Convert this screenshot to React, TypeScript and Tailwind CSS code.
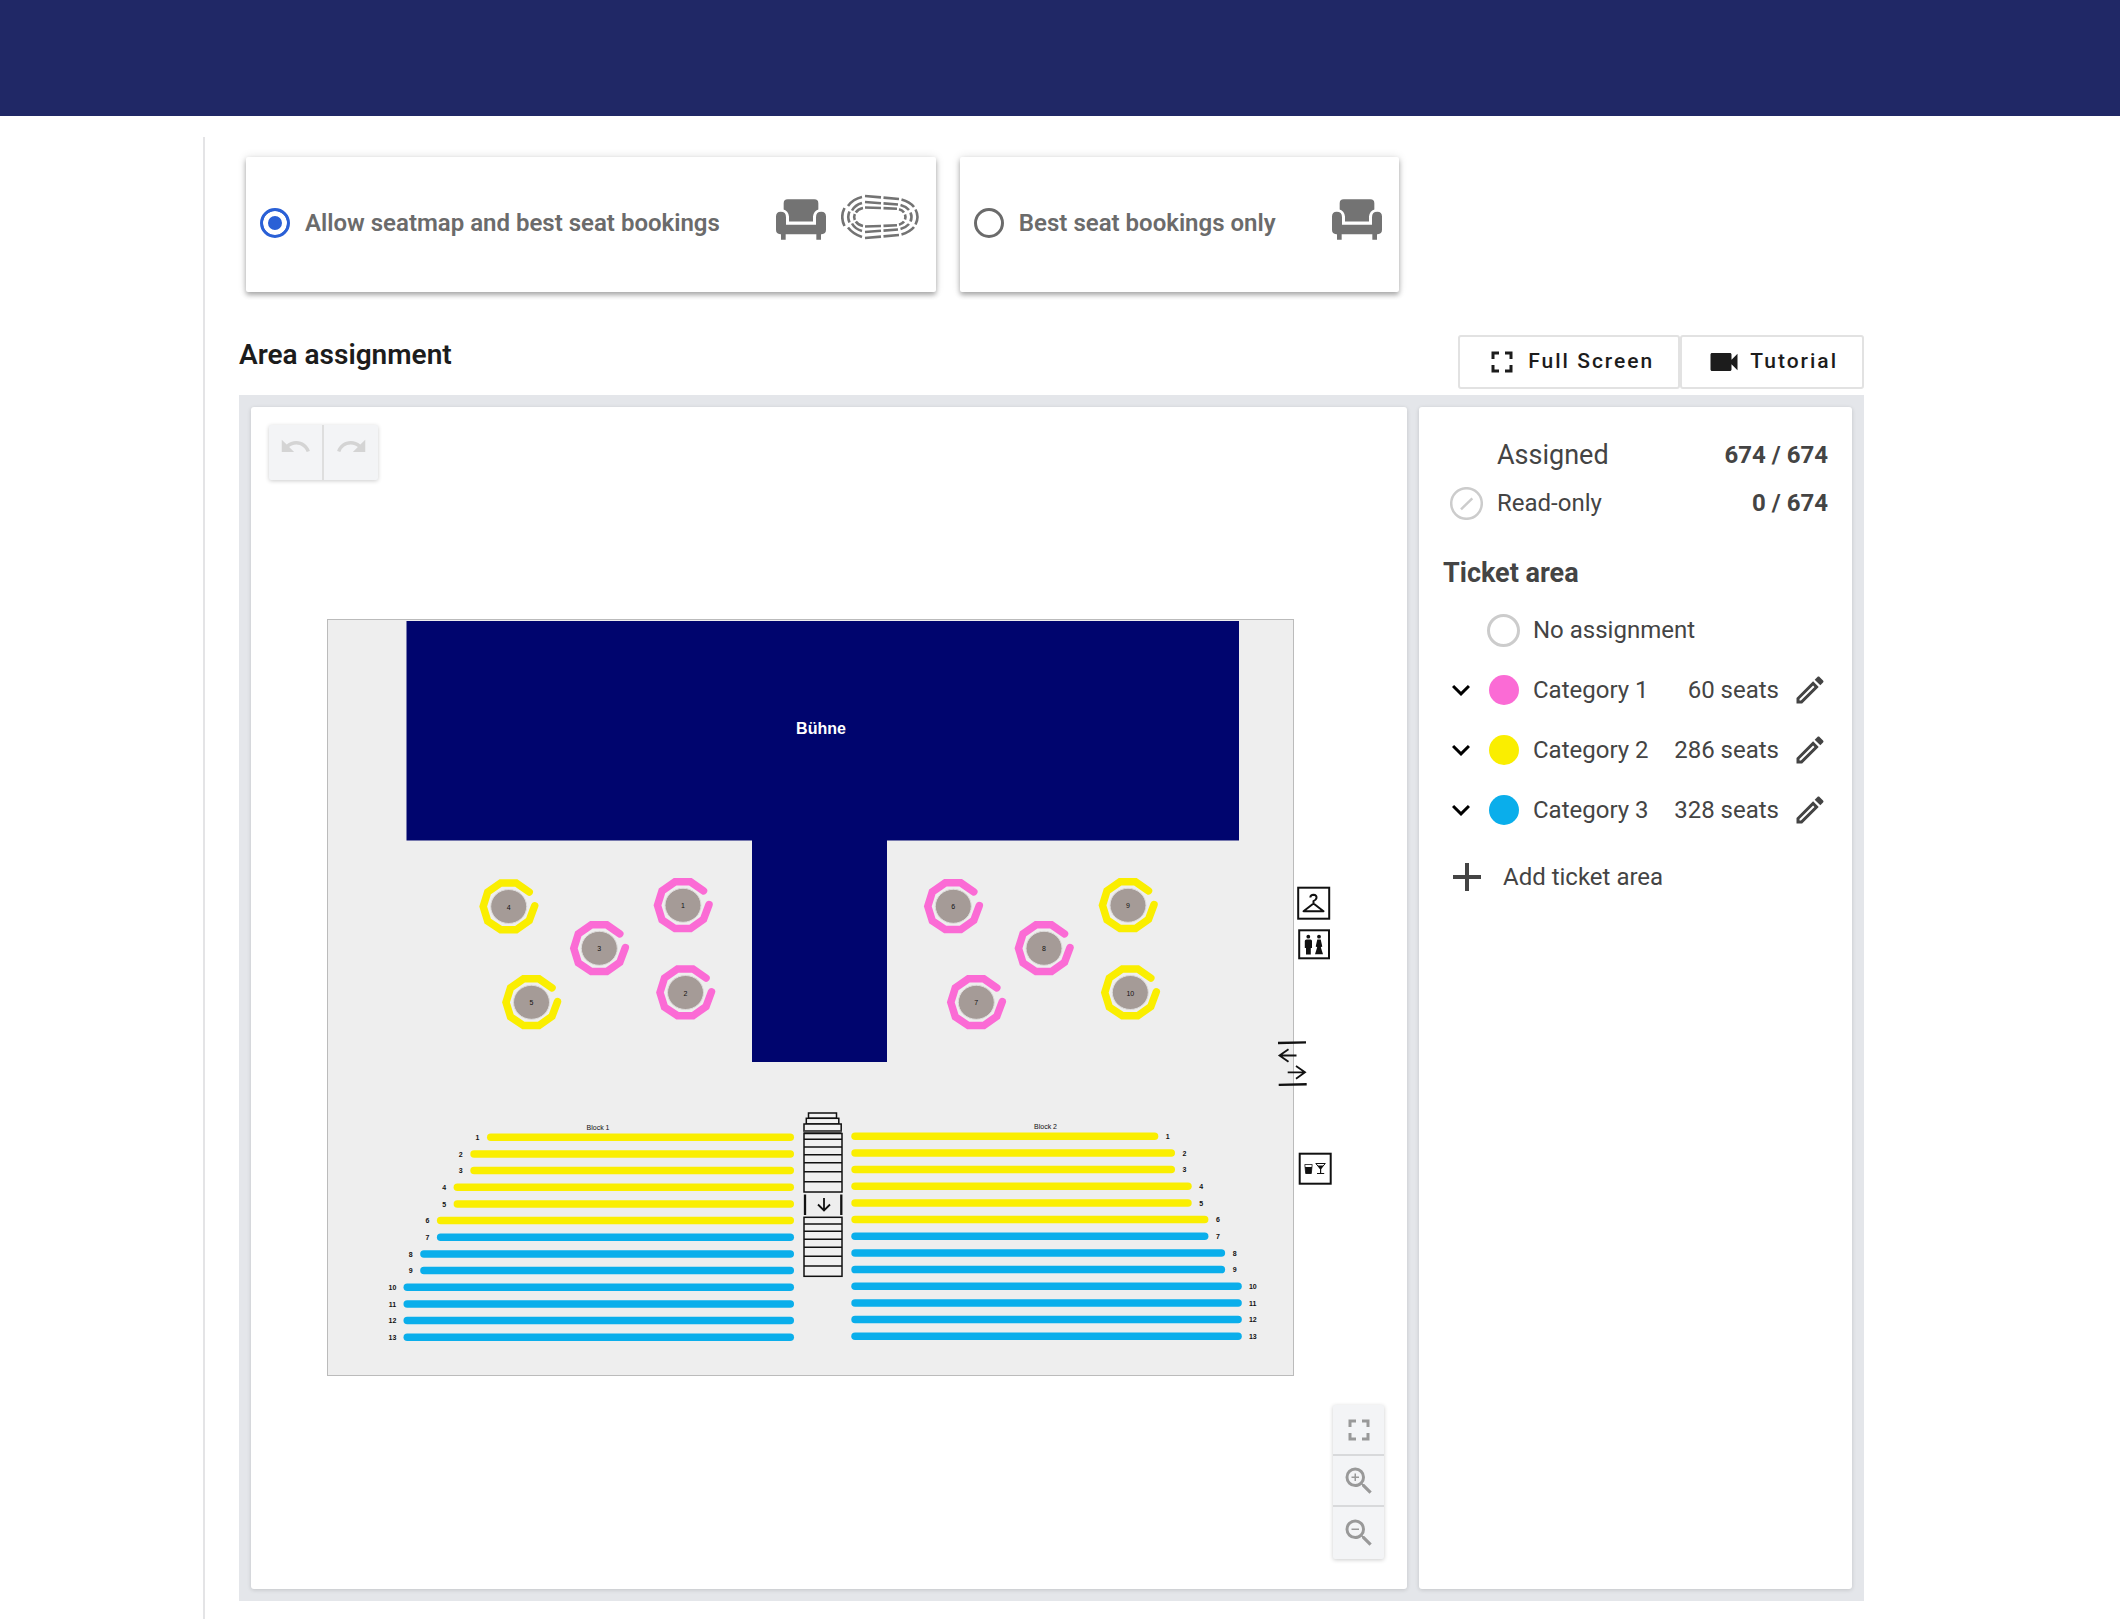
import { useState } from "react";
import type { ReactNode } from "react";
import {
  MdAdd,
  MdExpandMore,
  MdFullscreen,
  MdOutlineEdit,
  MdRedo,
  MdUndo,
  MdVideocam,
  MdZoomIn,
  MdZoomOut,
} from "react-icons/md";

const PINK = "#fb6bd5";
const YELLOW = "#faee00";
const BLUE = "#0aaeeb";

const categories = [
  { name: "Category 1", seats: 60, dot: "bg-[#fb6bd5]" },
  { name: "Category 2", seats: 286, dot: "bg-[#faee00]" },
  { name: "Category 3", seats: 328, dot: "bg-[#0aaeeb]" },
];

const tables = [
  { n: 1, x: 683, y: 906.3, color: PINK },
  { n: 2, x: 685.5, y: 993.5, color: PINK },
  { n: 3, x: 599.3, y: 949.3, color: PINK },
  { n: 4, x: 508.7, y: 907.5, color: YELLOW },
  { n: 5, x: 531.5, y: 1003.3, color: YELLOW },
  { n: 6, x: 953.3, y: 907.3, color: PINK },
  { n: 7, x: 976.3, y: 1003.3, color: PINK },
  { n: 8, x: 1044, y: 949.3, color: PINK },
  { n: 9, x: 1128, y: 906.3, color: YELLOW },
  { n: 10, x: 1130.3, y: 993.5, color: YELLOW },
];

// how many steps each row is longer than row 1
const rowSteps = [0, 1, 1, 2, 2, 3, 3, 4, 4, 5, 5, 5, 5];

const upperStairs = [1140.3, 1148, 1155.7, 1163.7, 1172.7, 1182.7];
const lowerStairs = [1225, 1232.3, 1240.3, 1248.3, 1257.3, 1267];

function ChairIcon() {
  return (
    <svg viewBox="0 0 150 122" className="h-[41px] w-[50px]" fill="#737373" aria-hidden="true">
      <path d="M35 0H115Q127 0 127 12V31Q113 36 111 52V67H39V52Q37 36 23 31V12Q23 0 35 0Z" />
      <path d="M0 52Q0 38 14 38Q30 38 30 54V77H120V54Q120 38 136 38Q150 38 150 52V92Q150 105 137 105H135V122H121V105H29V122H15V105H13Q0 105 0 92Z" />
    </svg>
  );
}

function ArenaIcon() {
  return (
    <svg viewBox="0 0 78 46" className="h-[46px] w-[78px]" fill="none" stroke="#737373" strokeWidth="2.6" aria-hidden="true">
      <path d="M24 2L40 3.4M42.5 3.6L58 5M60.500 5.500Q69 8 73 13M74.500 15.500Q78.500 23 74.500 30.500M73 33Q69 38 60.500 40.500M58 41L42.500 42.400M40 42.600L24 44M21 43Q12 40 7 33.500M3.500 32Q-1 23 3.500 14M7 12Q12 5 21 3" />
      <path d="M24 8L40 9.200M42.500 9.400L57 10.500M59.500 11Q65 12.500 68 16M69.500 18.500Q71.500 23 69.500 27.500M68 30Q65 33.500 59.500 35M57 35.500L42.500 36.600M40 36.800L24 38M21 37Q14 35 11 29.500M8.500 28.500Q6 23 8.500 17.500M11 16.500Q14 11 21 9" />
      <path d="M24 13.500L40 14M42.500 14.100L56 14.800M58 15.300Q61.500 16.300 63 18.500M64 20.500Q65 23 64 25.500M63 27.500Q61.500 29.700 58 30.700M56 31.200L42.500 31.900M40 32L24 32.500M22 32Q17 31 14.800 27.500M13.800 26Q12.500 23 13.800 20M14.800 18.500Q17 15 22 14" />
    </svg>
  );
}

function BookingOption({ label, value, checked, onSelect, children }: {
  label: string;
  value: string;
  checked: boolean;
  onSelect: (value: string) => void;
  children: ReactNode;
}) {
  return (
    <label className="flex h-[135px] items-center rounded-xs bg-white pr-[17px] pb-[3px] pl-[14px] shadow-[0_3px_5px_rgba(0,0,0,0.3),0_0_10px_rgba(0,0,0,0.12)]">
      <input
        type="radio"
        name="booking"
        value={value}
        checked={checked}
        onChange={() => onSelect(value)}
        className="size-[30px] shrink-0 appearance-none rounded-full border-3 border-[#6b6b6b] checked:border-[#2a60d6] checked:bg-[#2a60d6] checked:shadow-[inset_0_0_0_5px_white]"
      />
      <span className="pl-[15px] text-[24px] font-semibold whitespace-nowrap text-[#6b6b6b]">{label}</span>
      <span className="ml-14 flex h-[58px] items-end gap-[15px] pb-3">{children}</span>
    </label>
  );
}

function TopButton({ icon, children }: { icon: ReactNode; children: ReactNode }) {
  return (
    <button
      type="button"
      className="flex h-[54px] items-center gap-2 rounded-[3px] border-2 border-[#e2e2e2] bg-white px-6 text-[21px] font-medium tracking-[2px] text-[#1c1c1c]"
    >
      {icon}
      {children}
    </button>
  );
}

function Table({ n, x, y, color }: { n: number; x: number; y: number; color: string }) {
  return (
    <g transform={`translate(${x} ${y})`}>
      <path
        d="M20.500 -14.500L7.500 -23.500H-8L-21 -14.500L-25.500 0L-21 14.500L-8 23.200H7.500L20.500 14L26 -0.700"
        fill="none"
        stroke={color}
        strokeWidth="7.500"
        strokeLinecap="round"
      />
      <ellipse rx="18" ry="17" fill="#a59b97" stroke="#dedcdb" />
      <text y="3" textAnchor="middle" fontSize="7" fill="#111">{n}</text>
    </g>
  );
}

function SeatRows() {
  return (
    <g fill="#111" fontSize="7" textAnchor="middle">
      <text x="598" y="1131">Block 1</text>
      <text x="1045.500" y="1129.500">Block 2</text>
      {rowSteps.map((step, i) => {
        const color = i < 6 ? YELLOW : BLUE;
        const length = 307 + step * 16.7;
        const y = 1134.500 + i * 16.67;
        const gap = i < 9 ? 9.500 : 11;
        return (
          <g key={i}>
            <rect x={794 - length} y={y} width={length} height="7.500" rx="3.750" fill={color} />
            <text x={794 - length - gap} y={y + 6.500} fontWeight="bold">{i + 1}</text>
            <rect x={851.300} y={y - 1} width={length} height="7.500" rx="3.750" fill={color} />
            <text x={851.300 + length + gap} y={y + 5.500} fontWeight="bold">{i + 1}</text>
          </g>
        );
      })}
    </g>
  );
}

function Stairs() {
  return (
    <g fill="none" stroke="#111" strokeWidth="1.500">
      <g fill="#f3f3f3">
        <rect x="808.500" y="1114" width="28" height="5.300" />
        <rect x="806.300" y="1119.300" width="32.500" height="5.700" />
        <rect x="804" y="1125" width="37.200" height="7" />
      </g>
      <path d="M803.500 1132.700H841.700" strokeWidth="2.500" stroke="#555" />
      <rect x="804" y="1134.500" width="38" height="58.500" fill="#f0f0f0" />
      {upperStairs.map((y) => <path key={y} d={`M804 ${y}H842`} />)}
      <path d="M805 1195.500V1216M841.300 1195.500V1216" strokeWidth="2.300" />
      <path d="M824 1199V1211.500M818 1205.500L824 1211.500L830 1205.500" strokeWidth="1.800" />
      <rect x="804" y="1218.300" width="38" height="59" fill="#f0f0f0" />
      {lowerStairs.map((y) => <path key={y} d={`M804 ${y}H842`} />)}
    </g>
  );
}

function VenueSymbols() {
  return (
    <g>
      {/* cloakroom */}
      <rect x="1298.200" y="888.700" width="31" height="31" fill="white" stroke="#111" strokeWidth="2" />
      <path
        d="M1310.300 898.500Q1310.500 895.800 1313.500 895.800Q1316.800 896 1316.500 899Q1316 901 1313.500 902.200V904.500M1313.500 904.500L1303.500 912.200H1323.500Z"
        fill="none"
        stroke="#111"
        strokeWidth="2"
        strokeLinejoin="round"
      />
      {/* toilets */}
      <rect x="1299.200" y="931.300" width="29.800" height="28" fill="white" stroke="#111" strokeWidth="2" />
      <g fill="#111">
        <circle cx="1308.300" cy="937.700" r="1.900" />
        <path d="M1306.500 940.500H1310.500Q1312 940.500 1312 942V949H1310.800V955.500H1306V949H1304.800V942Q1304.800 940.500 1306.500 940.500Z" />
        <circle cx="1319" cy="937.700" r="1.900" />
        <path d="M1317.300 940.500H1320.700L1322.300 947.500L1320.800 948.300L1323 955.300H1315L1317.200 948.300L1315.700 947.500Z" />
      </g>
      {/* entrance */}
      <g fill="none" stroke="#111" strokeWidth="1.800">
        <path d="M1278 1044L1306 1043.400M1278.700 1085.900L1306.700 1085.300" strokeWidth="2.400" />
        <path d="M1296.500 1056.500H1279.500M1288.500 1050.300L1279.500 1056.500L1288.500 1062.800" />
        <path d="M1287.700 1073.300H1305M1296 1067L1305 1073.300L1296 1079.800" />
      </g>
      {/* bar */}
      <rect x="1299.700" y="1154.700" width="31" height="30" fill="white" stroke="#111" strokeWidth="2" />
      <path d="M1304.800 1165.500H1312.200L1311.300 1174.500H1305.700Z" fill="white" stroke="#111" strokeWidth="0.800" />
      <path d="M1305 1168H1312L1311.300 1174.700H1305.700Z" fill="#111" />
      <path d="M1315.800 1164.500H1325.300L1320.500 1170Z" fill="white" stroke="#111" />
      <path d="M1317.300 1166.500H1323.700L1321.200 1170V1174H1324.200V1175H1317V1174H1320V1170Z" fill="#111" />
    </g>
  );
}

function SeatMap() {
  return (
    <svg
      viewBox="269 619 1120 760"
      className="mt-[138px] w-full"
      fontFamily="'Liberation Sans', Arial, sans-serif"
      role="img"
      aria-label="Seat map"
    >
      <rect x="327.500" y="620.500" width="966" height="756" fill="#eee" stroke="#bbb" />
      <path d="M406.500 622H1239V841.500H887V1063H752V841.500H406.500Z" fill="#00056e" />
      <text x="821" y="735" textAnchor="middle" fontSize="16" fontWeight="bold" fill="white">Bühne</text>
      {tables.map((t) => <Table key={t.n} {...t} />)}
      <SeatRows />
      <Stairs />
      <VenueSymbols />
    </svg>
  );
}

function AreaPanel() {
  return (
    <aside className="w-[433px] shrink-0 rounded-[3px] bg-white px-6 pt-6 text-[24px] text-[#444] shadow-[0_1px_4px_rgba(0,0,0,0.15)]">
      <dl>
        <div className="flex h-12 items-center pl-[54px]">
          <dt className="text-[27px]">Assigned</dt>
          <dd className="ml-auto font-bold">674 / 674</dd>
        </div>
        <div className="flex h-12 items-center pl-[7px]">
          <svg viewBox="0 0 33 33" className="mr-[14px] size-[33px]" fill="none" stroke="#ccc" aria-hidden="true">
            <circle cx="16.500" cy="16.500" r="15.300" strokeWidth="2.500" />
            <path d="M11 22.300L22.300 11.300" strokeWidth="2.500" />
          </svg>
          <dt>Read-only</dt>
          <dd className="ml-auto font-bold">0 / 674</dd>
        </div>
      </dl>
      <h3 className="mt-7 mb-[9px] text-[27px] leading-9 font-bold">Ticket area</h3>
      <ul>
        <li className="flex h-[60px] items-center pl-11">
          <span className="size-[33px] rounded-full border-3 border-[#ccc]" />
          <span className="pl-[13px]">No assignment</span>
        </li>
        {categories.map((c) => (
          <li key={c.name} className="flex h-[60px] items-center">
            <button type="button" aria-label={`Expand ${c.name}`} className="text-black">
              <MdExpandMore size={36} />
            </button>
            <span className="ml-2 flex w-[33px] justify-center">
              <span className={`size-[30px] rounded-full ${c.dot}`} />
            </span>
            <span className="pl-[13px]">{c.name}</span>
            <span className="ml-auto pr-[13px]">{c.seats} seats</span>
            <button type="button" aria-label={`Edit ${c.name}`}>
              <MdOutlineEdit size={36} />
            </button>
          </li>
        ))}
      </ul>
      <button type="button" className="mt-[7px] flex h-[60px] items-center gap-3">
        <MdAdd size={48} />
        Add ticket area
      </button>
    </aside>
  );
}

export default function App() {
  const [booking, setBooking] = useState("seatmap");

  return (
    <div className="flex min-h-screen flex-col bg-white font-['Roboto',sans-serif]">
      <header className="h-[116px] bg-[#202866]" />
      <main className="mt-[21px] mr-[256px] ml-[203px] flex-1 border-l-2 border-[#e4e4e6] pt-5 pb-4 pl-[34px]">
        <div className="flex gap-6 px-[7px]">
          <BookingOption
            label="Allow seatmap and best seat bookings"
            value="seatmap"
            checked={booking === "seatmap"}
            onSelect={setBooking}
          >
            <ChairIcon />
            <ArenaIcon />
          </BookingOption>
          <BookingOption
            label="Best seat bookings only"
            value="best"
            checked={booking === "best"}
            onSelect={setBooking}
          >
            <ChairIcon />
          </BookingOption>
        </div>

        <div className="mt-[43px] flex items-start justify-between">
          <h2 className="text-[28px] leading-10 font-semibold text-[#1c1c1c]">Area assignment</h2>
          <div className="flex">
            <TopButton icon={<MdFullscreen size={36} />}>Full Screen</TopButton>
            <TopButton icon={<MdVideocam size={36} />}>Tutorial</TopButton>
          </div>
        </div>

        <div className="mt-[6px] flex gap-3 bg-[#e4e6ea] p-3">
          <section className="flex min-w-0 flex-1 flex-col rounded-[3px] bg-white px-[18px] pt-[18px] pb-[30px] shadow-[0_1px_4px_rgba(0,0,0,0.15)]">
            <div className="flex self-start rounded-xs bg-[#f3f4f6] text-[#d4d4d4] shadow-[0_1px_4px_rgba(0,0,0,0.2)]">
              <button type="button" aria-label="Undo" disabled className="flex h-[55px] w-[53px] justify-center pt-[5px]">
                <MdUndo size={33} />
              </button>
              <button type="button" aria-label="Redo" disabled className="flex h-[55px] w-14 justify-center border-l-2 border-[#dedede] pt-[5px]">
                <MdRedo size={33} />
              </button>
            </div>
            <SeatMap />
            <div className="mt-[27px] mr-[5px] flex w-[51px] flex-col divide-y-2 divide-[#d8d9db] self-end rounded-xs bg-[#f3f4f6] text-[#999] shadow-[0_1px_4px_rgba(0,0,0,0.2)]">
              <button type="button" aria-label="Fit to screen" className="flex h-[51px] items-center justify-center">
                <MdFullscreen size={36} />
              </button>
              <button type="button" aria-label="Zoom in" className="flex h-[51px] items-center justify-center">
                <MdZoomIn size={36} />
              </button>
              <button type="button" aria-label="Zoom out" className="flex h-[52px] items-center justify-center">
                <MdZoomOut size={36} />
              </button>
            </div>
          </section>
          <AreaPanel />
        </div>
      </main>
    </div>
  );
}
